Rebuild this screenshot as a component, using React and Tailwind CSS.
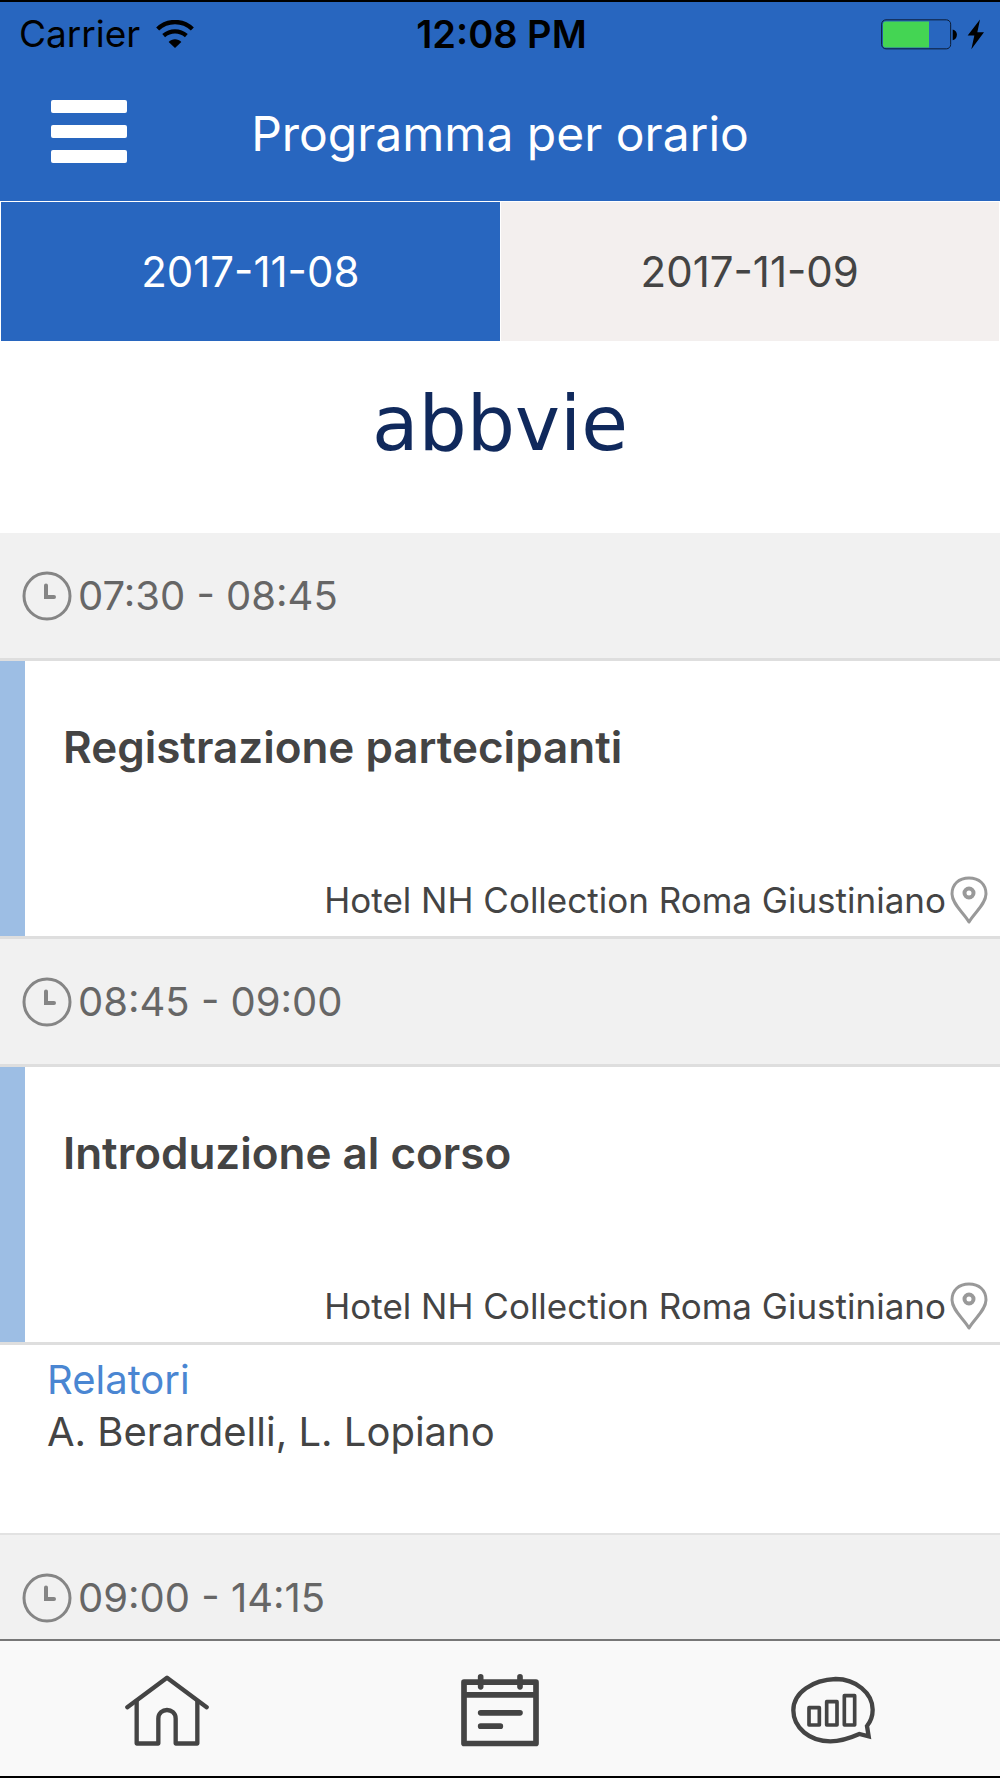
import React, { useState } from 'react';

const days = ['2017-11-08', '2017-11-09'];

const slots = [
  {
    time: '07:30 - 08:45',
    title: 'Registrazione partecipanti',
    place: 'Hotel NH Collection Roma Giustiniano',
  },
  {
    time: '08:45 - 09:00',
    title: 'Introduzione al corso',
    place: 'Hotel NH Collection Roma Giustiniano',
    speakers: 'A. Berardelli, L. Lopiano',
  },
  { time: '09:00 - 14:15' },
];

const WifiIcon = () => (
  <svg viewBox="0 0 114 84" className="w-[38px] h-7" aria-hidden="true">
    <g fill="none" stroke="currentColor" strokeWidth="13">
      <path d="M5 27 C34 -1 80 -1 109 27" />
      <path d="M23 47 C43 30 71 30 91 47" />
    </g>
    <path d="M38 66 C48 55 66 55 76 66 L57 84 Z" fill="currentColor" />
  </svg>
);

const BatteryIcon = () => (
  <svg viewBox="0 0 309 92" className="w-[103px] h-[31px]" aria-hidden="true">
    <rect x="2" y="2" width="207" height="87" rx="13" fill="none" stroke="#0b1c36" strokeWidth="3" />
    <path d="M14 7 H144 V85 H14 Q6 85 6 77 V15 Q6 7 14 7 Z" fill="#44d553" />
    <path d="M215 31 C232 34 232 60 215 63 Z" fill="#000" />
    <path d="M297 1 L260 49 H280 L271 90 L309 39 H289 Z" fill="#000" />
  </svg>
);

const ClockIcon = () => (
  <svg viewBox="0 0 50 50" className="w-[50px] h-[50px] shrink-0" fill="none" stroke="#858585" aria-hidden="true">
    <circle cx="25" cy="25" r="23" strokeWidth="3" />
    <path d="M24 14.5 V26 H32" strokeWidth="4" strokeLinecap="round" />
  </svg>
);

const PinIcon = () => (
  <svg viewBox="0 0 38 48" className="w-[38px] h-12 shrink-0" fill="none" stroke="#999" strokeWidth="3" aria-hidden="true">
    <path d="M19 46 C14 37 2 28 2 18 C2 8 9 2 19 2 C29 2 36 8 36 18 C36 28 24 37 19 46 Z" strokeLinejoin="round" />
    <circle cx="19" cy="17" r="4.5" strokeWidth="4" />
  </svg>
);

const HomeIcon = () => (
  <svg viewBox="76 163 252 212" className="w-[84px] h-[71px]" fill="none" stroke="currentColor" strokeWidth="13" strokeLinecap="round" strokeLinejoin="round" aria-hidden="true">
    <path d="M83 259 L202 171 L321 259" />
    <path d="M111 242 V368 H176 V293 C176 259 228 259 228 293 V368 H293 V242" />
  </svg>
);

const CalendarIcon = () => (
  <svg viewBox="96 162 234 218" className="w-[78px] h-[73px]" fill="none" stroke="currentColor" strokeWidth="17" strokeLinecap="round" strokeLinejoin="round" aria-hidden="true">
    <path d="M105 186 H321 V370 H105 Z M105 224 H321" />
    <path d="M155 170 V200 M273 170 V200 M155 278 H273 M155 318 H214" />
  </svg>
);

const PollIcon = () => (
  <svg viewBox="126 168 252 204" className="w-[84px] h-[68px]" fill="none" stroke="currentColor" aria-hidden="true">
    <path
      d="M354 318 C365 304 371 288 371 269 C371 219 320 177 260 177 C192 180 133 216 133 271 C133 324 183 364 244 364 C277 364 304 354 331 342 L359 349 Z"
      strokeWidth="13"
    />
    <path d="M180 263 H211 V315 H180 Z M233 245 H264 V315 H233 Z M286 227 H317 V315 H286 Z" strokeWidth="11" strokeLinejoin="round" />
  </svg>
);

const navItems = [
  { label: 'Home', Icon: HomeIcon },
  { label: 'Programma', Icon: CalendarIcon },
  { label: 'Sondaggi', Icon: PollIcon },
];

const Slot = ({ slot }) => (
  <section>
    <div className="flex items-center gap-1.5 h-32 px-[22px] bg-[#f1f1f1] border-b-[3px] border-[#dedede] text-[40px] text-[#666]">
      <ClockIcon />
      <time>{slot.time}</time>
    </div>

    {slot.title && (
      <article className="flex border-b-[3px] border-[#dedede]">
        <div className="w-[25px] shrink-0 bg-[#9dbee4]"></div>
        <div className="flex-1 flex flex-col justify-between pt-14 pb-3 pl-[38px] pr-3 h-[275px]">
          <h2 className="text-[44px] leading-[60px] font-semibold">{slot.title}</h2>
          <p className="flex items-center justify-end gap-1 text-[35px] leading-[48px]">
            {slot.place}
            <PinIcon />
          </p>
        </div>
      </article>
    )}

    {slot.speakers && (
      <div className="h-[190px] px-[47px] pt-[9px] border-b-2 border-[#e2e2e2] text-[40px] leading-[52px]">
        <h3 className="text-[#4a86d2]">Relatori</h3>
        <p>{slot.speakers}</p>
      </div>
    )}
  </section>
);

const App = () => {
  const [activeDay, setActiveDay] = useState(days[0]);

  return (
    <div className="flex flex-col h-screen bg-white text-[#444] font-['Inter','Liberation_Sans',sans-serif] border-y-2 border-black">
      <header className="shrink-0 bg-[#2866bf]">
        <div className="grid grid-cols-3 items-center h-16 pl-[19px] pr-4 text-black text-[38px]">
          <div className="flex items-center gap-4">
            <span className="text-[37px]">Carrier</span>
            <WifiIcon />
          </div>
          <span className="text-center font-semibold whitespace-nowrap">12:08 PM</span>
          <div className="flex justify-end">
            <BatteryIcon />
          </div>
        </div>

        <div className="grid grid-cols-[1fr_auto_1fr] items-center h-[135px] px-[51px] text-white">
          <button type="button" aria-label="Menu" className="flex flex-col gap-3 w-[76px] pb-1">
            <span className="h-[13px] w-full rounded-xs bg-white"></span>
            <span className="h-[13px] w-full rounded-xs bg-white"></span>
            <span className="h-[13px] w-full rounded-xs bg-white"></span>
          </button>
          <h1 className="text-[48px] leading-[60px]">Programma per orario</h1>
        </div>
      </header>

      <div className="grid grid-cols-2 gap-px px-px shrink-0 border-y border-white">
        {days.map((day) => (
          <button
            key={day}
            type="button"
            onClick={() => setActiveDay(day)}
            className={`h-[139px] text-[42px] ${day === activeDay ? 'bg-[#2866bf] text-white' : 'bg-[#f3efee] text-[#444]'}`}
          >
            {day}
          </button>
        ))}
      </div>

      <main className="flex-1 min-h-0 overflow-y-auto [scrollbar-width:none]">
        <div className="flex items-center justify-center h-[191px] pb-7 text-[76px] leading-none text-[#10295c] font-['DejaVu_Sans',sans-serif]">
          abbvie
        </div>
        {slots.map((slot) => (
          <Slot key={slot.time} slot={slot} />
        ))}
      </main>

      <nav className="grid grid-cols-3 shrink-0 h-[137px] pt-[3px] bg-[#f9f9f9] border-t-2 border-[#777]">
        {navItems.map(({ label, Icon }) => (
          <button key={label} type="button" aria-label={label} className="flex items-center justify-center">
            <Icon />
          </button>
        ))}
      </nav>
    </div>
  );
};

export default App;
